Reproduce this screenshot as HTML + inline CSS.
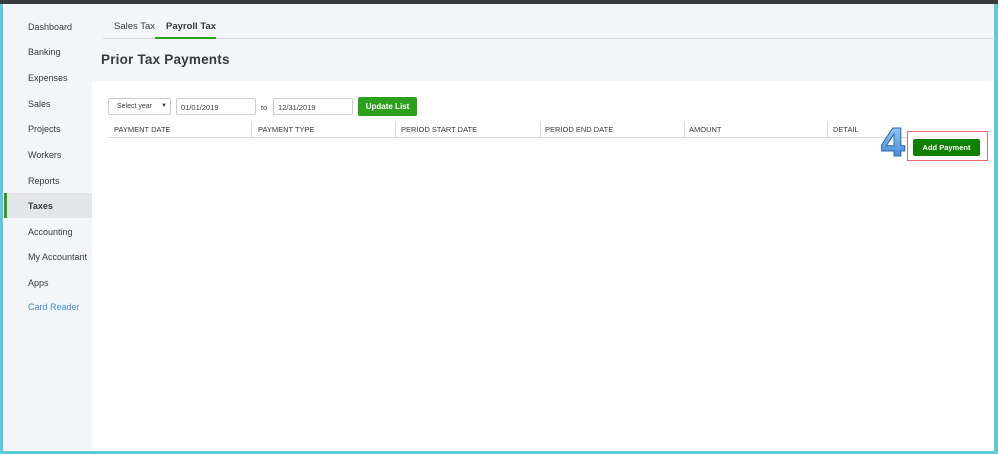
<!DOCTYPE html>
<html><head><meta charset="utf-8"><style>
*{margin:0;padding:0;box-sizing:border-box}
body{width:998px;height:454px;overflow:hidden;background:#fff;font-family:"Liberation Sans",sans-serif;position:relative}
.a{position:absolute}
.nav{position:absolute;left:28px;font-size:9px;color:#393a3d}
.th{position:absolute;top:125px;font-size:7.5px;color:#393a3d}
.sep{position:absolute;top:121px;width:1px;height:16px;background:#d4d7dc}
.inp{position:absolute;top:98px;height:17px;border:1px solid #c9ccd1;background:#fff;border-radius:2px;font-size:7.5px;color:#393a3d;padding:4px 0 0 4px}
</style></head><body>
<div class="a" style="left:0;top:0;width:998px;height:4px;background:#393a3d"></div>
<div class="a" style="left:0;top:4px;width:998px;height:450px;background:#5bcbdc"></div>
<div class="a" style="left:3px;top:4px;width:991px;height:447px;background:#fff"></div>
<div class="a" style="left:4px;top:4px;width:990px;height:446px;background:#f4f5f8"></div>
<div class="a" style="left:92px;top:81px;width:902px;height:369px;background:#fff"></div>
<div class="a" style="left:4px;top:193px;width:88px;height:25px;background:#e3e5e8"></div>
<div class="a" style="left:4px;top:193px;width:3px;height:25px;background:#2ca01c"></div>
<div class="nav" style="top:22px">Dashboard</div>
<div class="nav" style="top:47px">Banking</div>
<div class="nav" style="top:73px">Expenses</div>
<div class="nav" style="top:99px">Sales</div>
<div class="nav" style="top:124px">Projects</div>
<div class="nav" style="top:150px">Workers</div>
<div class="nav" style="top:176px">Reports</div>
<div class="nav" style="top:201px;font-weight:bold">Taxes</div>
<div class="nav" style="top:227px">Accounting</div>
<div class="nav" style="top:252px">My Accountant</div>
<div class="nav" style="top:278px">Apps</div>
<div class="nav" style="top:302px;color:#3d8fd6">Card Reader</div>
<div class="a" style="left:103px;top:38px;width:892px;height:1px;background:#d4d7dc"></div>
<div class="a" style="left:114px;top:21px;font-size:9.5px;color:#393a3d">Sales Tax</div>
<div class="a" style="left:166px;top:21px;font-size:9.5px;font-weight:bold;color:#393a3d">Payroll Tax</div>
<div class="a" style="left:155px;top:37px;width:61px;height:2px;background:#2ca01c"></div>
<div class="a" style="left:101px;top:52px;font-size:13.5px;font-weight:bold;color:#393a3d;letter-spacing:.2px">Prior Tax Payments</div>
<div class="inp" style="left:108px;width:63px;padding-left:8px;font-size:7px">Select year<span style="position:absolute;left:52px;top:4px;font-size:6px">▼</span></div>
<div class="inp" style="left:176px;width:80px">01/01/2019</div>
<div class="a" style="left:261px;top:103px;font-size:7.5px;color:#393a3d">to</div>
<div class="inp" style="left:273px;width:80px">12/31/2019</div>
<div class="a" style="left:358px;top:97px;width:59px;height:19px;background:#2ca01c;border-radius:2px;color:#fff;font-size:8px;font-weight:bold;text-align:center;line-height:19px">Update List</div>
<div class="th" style="left:114px">PAYMENT DATE</div>
<div class="sep" style="left:251px"></div><div class="th" style="left:258px">PAYMENT TYPE</div>
<div class="sep" style="left:395px"></div><div class="th" style="left:401px">PERIOD START DATE</div>
<div class="sep" style="left:540px"></div><div class="th" style="left:545px">PERIOD END DATE</div>
<div class="sep" style="left:684px"></div><div class="th" style="left:689px">AMOUNT</div>
<div class="sep" style="left:827px"></div><div class="th" style="left:833px">DETAIL</div>
<div class="a" style="left:108px;top:137px;width:798px;height:1px;background:#d4d7dc"></div>
<div class="a" style="left:876px;top:123px;font-family:'DejaVu Sans',sans-serif;font-style:normal;font-size:38px;font-weight:bold;-webkit-text-stroke:1px #2a6cb8;background:linear-gradient(#9fd0f8,#3a7fd0);-webkit-background-clip:text;-webkit-text-fill-color:transparent;line-height:40px;padding:0 4px">4</div>
<div class="a" style="left:907px;top:131px;width:81px;height:30px;border:1px solid #f06a6a"></div>
<div class="a" style="left:913px;top:139px;width:67px;height:17px;background:#108000;border-radius:2px;color:#fff;font-size:7.5px;font-weight:bold;text-align:center;line-height:17px">Add Payment</div>
</body></html>
